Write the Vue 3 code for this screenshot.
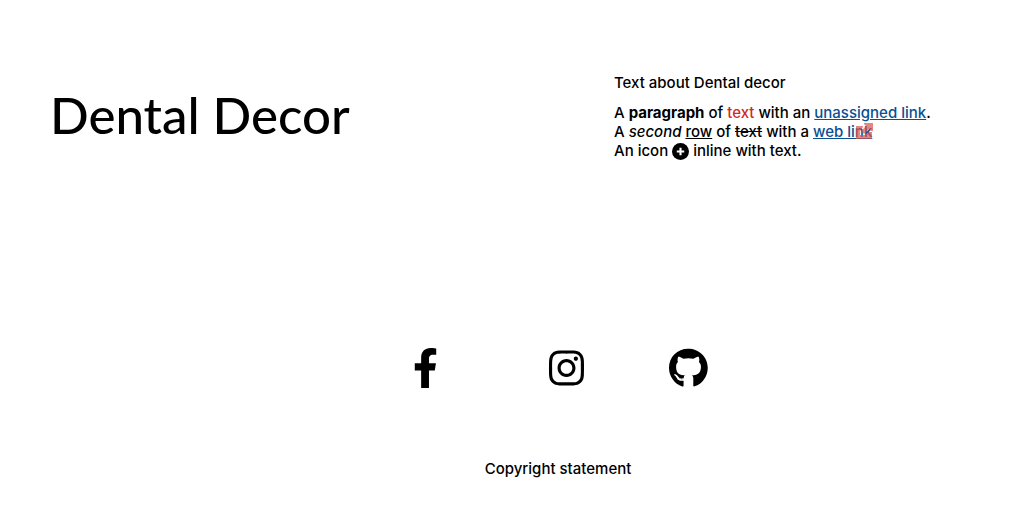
<script setup>
const socials = [
  {
    name: 'Facebook',
    key: 'facebook',
    box: '0 0 320 512',
    path: 'M279.14 288l14.22-92.66h-88.91v-60.13c0-25.35 12.42-50.06 52.24-50.06h40.42V6.26S260.43 0 225.36 0c-73.22 0-121.08 44.38-121.08 124.72v70.62H22.89V288h81.39v224h100.17V288z',
  },
  {
    name: 'Instagram',
    key: 'instagram',
    box: '0 0 448 512',
    path: 'M224.1 141c-63.6 0-114.9 51.3-114.9 114.9s51.3 114.9 114.9 114.9S339 319.5 339 255.9 287.7 141 224.1 141zm0 189.6c-41.1 0-74.7-33.5-74.7-74.7s33.5-74.7 74.7-74.7 74.7 33.5 74.7 74.7-33.6 74.7-74.7 74.7zm146.4-194.3c0 14.9-12 26.8-26.8 26.8-14.9 0-26.8-12-26.8-26.8s12-26.8 26.8-26.8 26.8 12 26.8 26.8zm76.1 27.2c-1.7-35.9-9.9-67.7-36.2-93.9-26.2-26.2-58-34.4-93.9-36.2-37-2.1-147.9-2.1-184.9 0-35.8 1.7-67.6 9.9-93.9 36.1s-34.4 58-36.2 93.9c-2.1 37-2.1 147.9 0 184.9 1.7 35.9 9.9 67.7 36.2 93.9s58 34.4 93.9 36.2c37 2.1 147.9 2.1 184.9 0 35.9-1.7 67.7-9.9 93.9-36.2 26.2-26.2 34.4-58 36.2-93.9 2.1-37 2.1-147.8 0-184.8zM398.8 388c-7.8 19.6-22.9 34.7-42.6 42.6-29.5 11.7-99.5 9-132.1 9s-102.7 2.6-132.1-9c-19.6-7.8-34.7-22.9-42.6-42.6-11.7-29.5-9-99.5-9-132.1s-2.6-102.7 9-132.1c7.8-19.6 22.9-34.7 42.6-42.6 29.5-11.7 99.5-9 132.1-9s102.7-2.6 132.1 9c19.6 7.8 34.7 22.9 42.6 42.6 11.7 29.5 9 99.5 9 132.1s2.7 102.7-9 132.1z',
  },
  {
    name: 'GitHub',
    key: 'github',
    box: '0 0 496 512',
    path: 'M165.9 397.4c0 2-2.3 3.6-5.2 3.6-3.3.3-5.6-1.3-5.6-3.6 0-2 2.3-3.6 5.2-3.6 3-.3 5.6 1.3 5.6 3.6zm-31.1-4.5c-.7 2 1.3 4.3 4.3 4.9 2.6 1 5.6 0 6.2-2s-1.3-4.3-4.3-5.2c-2.6-.7-5.5.3-6.2 2.3zm44.2-1.7c-2.9.7-4.9 2.6-4.6 4.9.3 2 2.9 3.3 5.9 2.6 2.9-.7 4.9-2.6 4.6-4.6-.3-1.9-3-3.2-5.9-2.9zM244.8 8C106.1 8 0 113.3 0 252c0 110.9 69.8 205.8 169.5 239.2 12.8 2.3 17.3-5.6 17.3-12.1 0-6.2-.3-40.4-.3-61.4 0 0-70 15-84.7-29.8 0 0-11.4-29.1-27.8-36.6 0 0-22.9-15.7 1.6-15.4 0 0 24.9 2 38.6 25.8 21.9 38.6 58.6 27.5 72.9 20.9 2.3-16 8.8-27.1 16-33.7-55.9-6.2-112.3-14.3-112.3-110.5 0-27.5 7.6-41.3 23.6-58.9-2.6-6.5-11.1-33.3 2.6-67.9 20.9-6.5 69 27 69 27 20-5.6 41.5-8.5 62.8-8.5s42.8 2.9 62.8 8.5c0 0 48.1-33.6 69-27 13.7 34.7 5.2 61.4 2.6 67.9 16 17.7 25.8 31.5 25.8 58.9 0 96.5-58.9 104.2-114.8 110.5 9.2 7.9 17 22.9 17 46.4 0 33.7-.3 75.4-.3 83.6 0 6.5 4.6 14.4 17.3 12.1C428.2 457.8 496 362.9 496 252 496 113.3 383.5 8 244.8 8z',
  },
]
</script>

<template>
  <div class="page">
    <header class="top">
      <h1 class="title">Dental Decor</h1>
      <section class="about">
        <h2 class="subtitle">Text about Dental decor</h2>
        <p class="copy">
          A <strong>paragraph</strong> of <span class="red">text</span> with an <a href="#">unassigned link</a>.<br />
          A <em>second</em> <u>row</u> of <s>text</s> with a
          <a class="web" href="#web">web link<svg class="badge" viewBox="0 0 17 16" aria-hidden="true"><path d="M0 3h7v1L4 8v4h5l3-3h4v7H0zM8 0h9v8h-2l-2-2-5 5-3-3 5-5-2-2z" /></svg></a><br />
          An icon
          <svg class="plus" viewBox="0 0 16 16" aria-hidden="true"><circle cx="8" cy="8" r="8" /><path d="M8 4.5v7M4.5 8h7" /></svg>
          inline with text.
        </p>
      </section>
    </header>
    <footer class="bottom">
      <nav class="socials" aria-label="Social links">
        <a v-for="s in socials" :key="s.key" :class="s.key" :href="'#' + s.key" :aria-label="s.name">
          <svg class="social-icon" :viewBox="s.box" aria-hidden="true"><path :d="s.path" /></svg>
        </a>
      </nav>
      <p class="copyright">Copyright statement</p>
    </footer>
  </div>
</template>

<style>
body {
  background: #fff;
}
</style>

<style scoped>
.page {
  padding: 73px 50px 36px;
  font-family: Inter, "Open Sans", sans-serif;
  font-size: 15px;
  font-weight: 500;
  line-height: 20px;
  color: #000;
}
.top {
  display: grid;
  grid-template-columns: 564fr 357fr;
}
.title {
  margin: 8px 0 0;
  font-family: Lato, "Open Sans", sans-serif;
  font-size: 51px;
  line-height: 68px;
  font-weight: 500;
}
.subtitle {
  margin: 0 0 10px;
  font-size: 15px;
  line-height: 20px;
  font-weight: 500;
}
.copy {
  margin: 0;
  line-height: 19px;
  white-space: nowrap;
}
.copy a {
  color: #0b4f91;
}
.red {
  color: #cf2a27;
}
.web {
  position: relative;
}
.badge {
  position: absolute;
  right: -1px;
  top: 1px;
  width: 17px;
  height: 16px;
  fill: #d9534f;
  opacity: 0.7;
}
.plus {
  width: 17px;
  height: 17px;
  vertical-align: -4px;
}
.plus path {
  fill: none;
  stroke: #fff;
  stroke-width: 2;
}
.bottom {
  margin-top: 188px;
  padding-left: 95px;
}
.socials {
  display: flex;
  justify-content: center;
  padding-left: 5px;
}
.socials a {
  display: block;
  color: #000;
}
.instagram {
  margin: 0 85px 0 111px;
}
.social-icon {
  display: block;
  height: 40px;
  fill: currentColor;
  overflow: visible;
}
.copyright {
  margin: 71px 0 0;
  text-align: center;
}
</style>
